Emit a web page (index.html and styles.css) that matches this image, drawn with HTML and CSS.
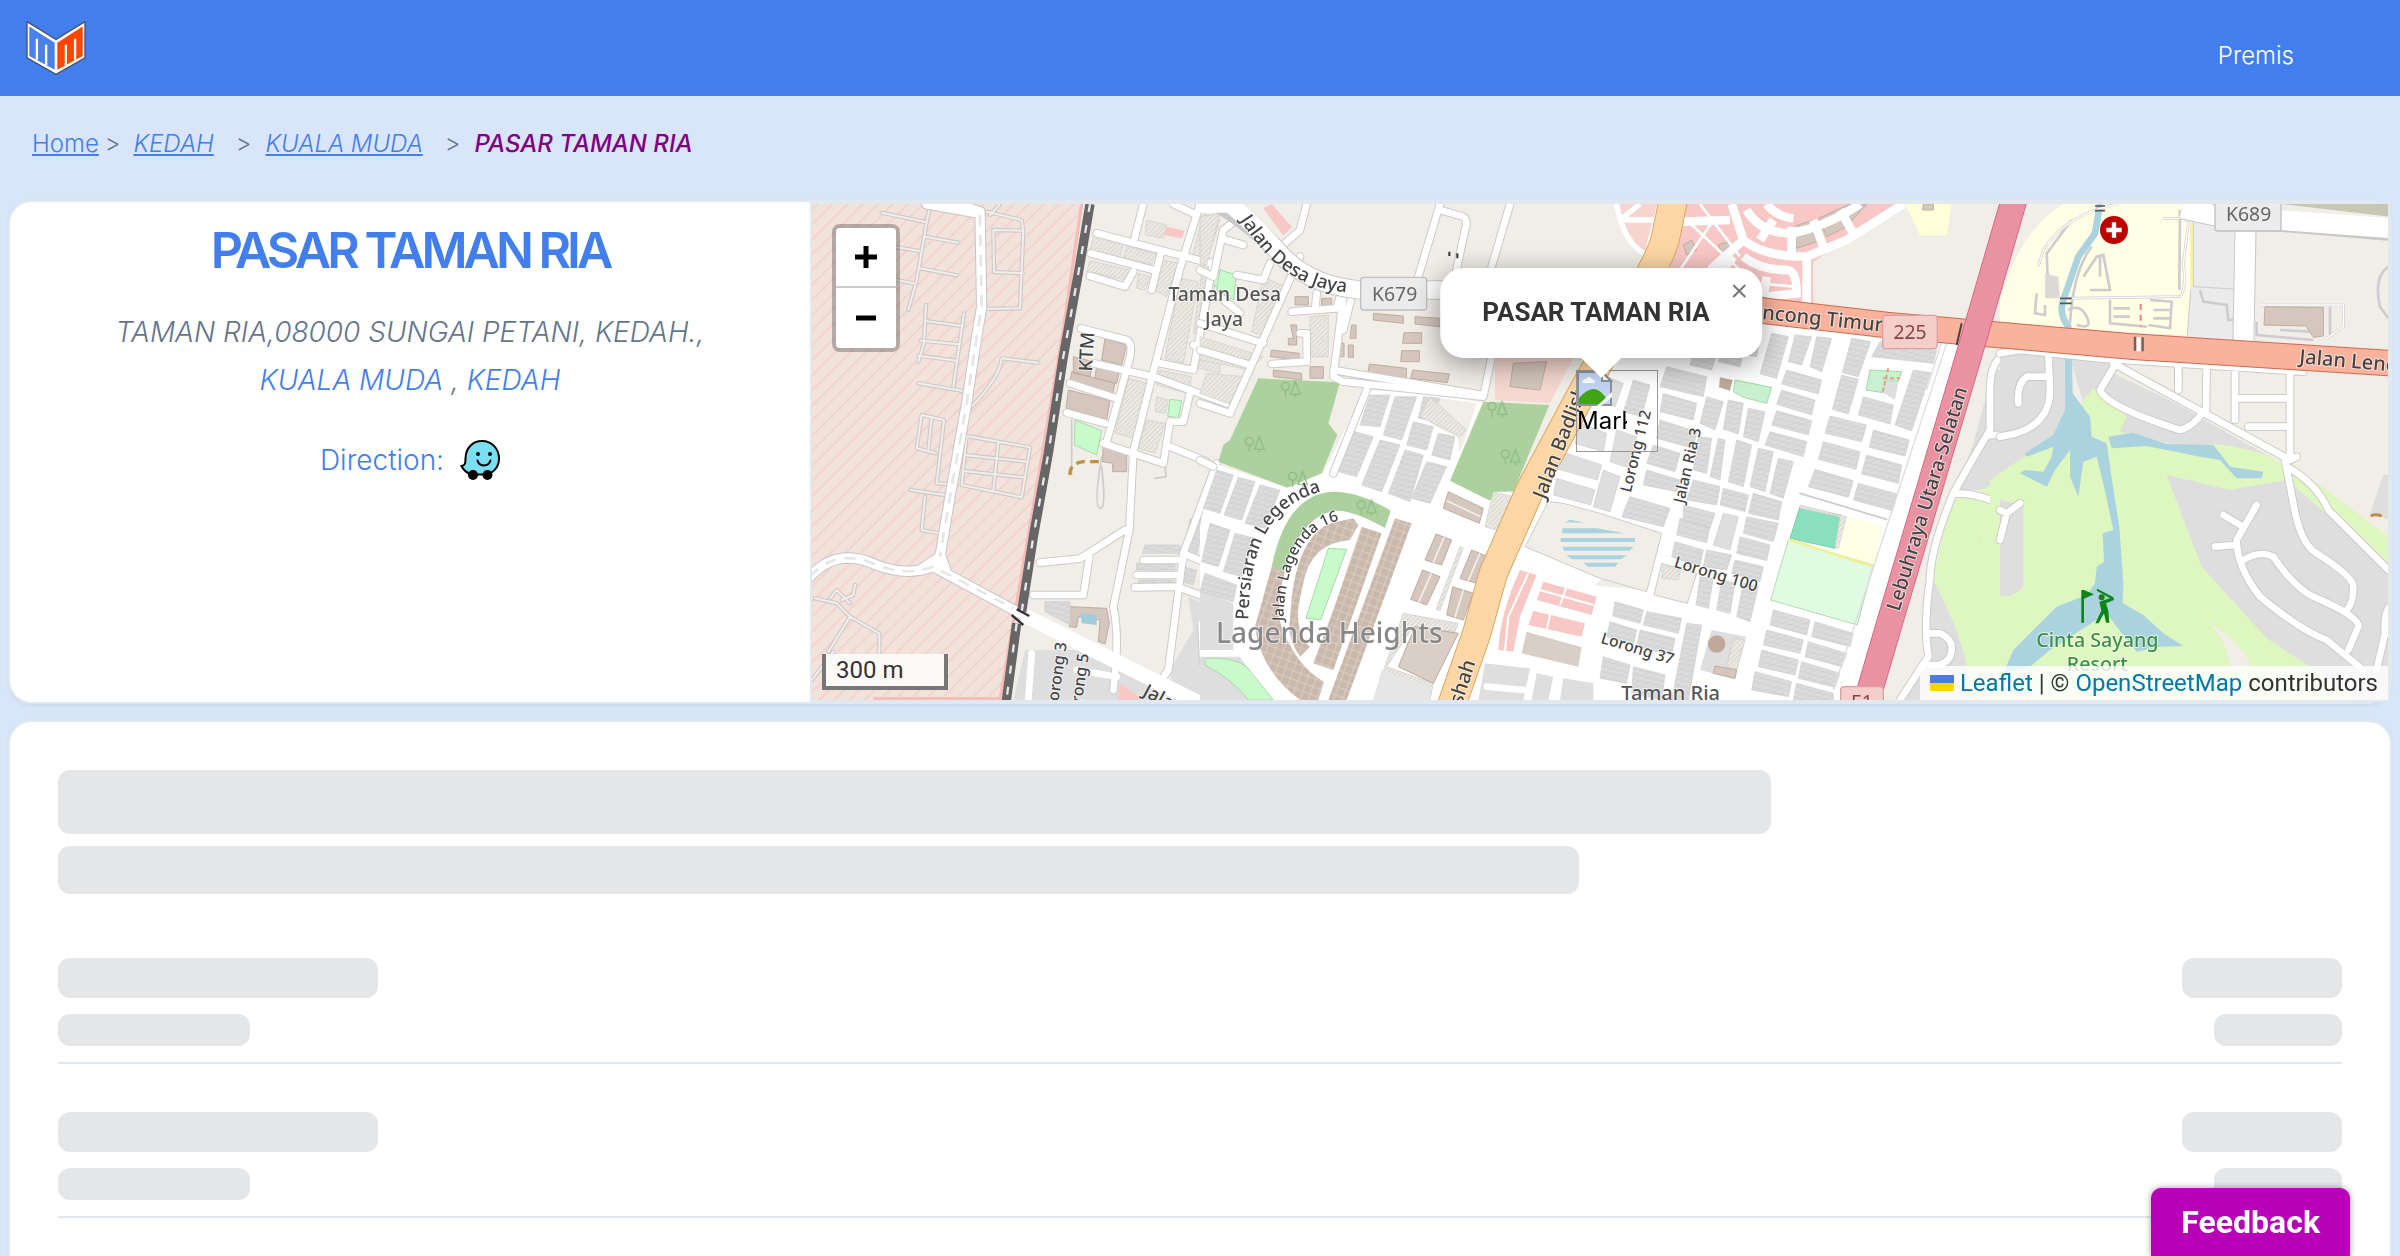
FILE: index.html
```html
<!DOCTYPE html>
<html lang="ms">
<head>
  <meta charset="UTF-8">
  <meta name="viewport" content="width=device-width, initial-scale=1.0">
  <title>PASAR TAMAN RIA</title>
  <link rel="stylesheet" href="styles.css">
</head>
<body>
  <header class="navbar">
    <a class="logo" href="#" aria-label="Home">
      <svg viewBox="0 0 180 164">
        <path d="M2 2 90 56 178 2V112L90 162 2 112Z" fill="#fff" stroke="#4a4f6b" stroke-width="4"/>
        <path d="M9 17 86 66V148L9 106Z" fill="#4a80e8"/>
        <path d="M171 17 94 66V148L171 106Z" fill="#ff4500"/>
        <path d="M32 54V118M60 72V134M120 72V134M148 54V118" stroke="#fff" stroke-width="7"/>
      </svg>
    </a>
    <a class="nav-link" href="#">Premis</a>
  </header>

  <nav class="breadcrumb">
    <a href="#">Home</a><span class="sep sep-first">&gt;</span>
    <a class="place" href="#">KEDAH</a><span class="sep">&gt;</span>
    <a class="place" href="#">KUALA MUDA</a><span class="sep">&gt;</span>
    <span class="current">PASAR TAMAN RIA</span>
  </nav>

  <main>
    <section class="card premise">
      <div class="info">
        <h1>PASAR TAMAN RIA</h1>
        <p class="address">TAMAN RIA,08000 SUNGAI PETANI, KEDAH.,<br><a href="#">KUALA MUDA</a> , <a href="#">KEDAH</a></p>
        <a class="direction" href="#">Direction:
          <svg class="waze" viewBox="0 0 80 80">
            <path d="M44 2C64 2 78 18 78 37C78 56 65 68 48 69H22C13 65 6 59 3 52C11 51 11 45 11 36C12 16 25 2 44 2Z" fill="#7bdff2" stroke="#000" stroke-width="4"/>
            <circle cx="26" cy="70" r="10"/><circle cx="55" cy="70" r="10"/>
            <circle cx="36" cy="28" r="4"/><circle cx="60" cy="28" r="4"/>
            <path d="M35 41C38 54 57 54 61 41" fill="none" stroke="#000" stroke-width="4" stroke-linecap="round"/>
          </svg>
        </a>
      </div>

      <div class="map">
        <svg class="tiles" viewBox="0 0 4728 1488" preserveAspectRatio="xMidYMid slice">
          <defs>
            <pattern id="industrial" width="32" height="32" patternUnits="userSpaceOnUse" patternTransform="rotate(45)">
              <rect width="32" height="32" fill="#f1e3dc"/><rect width="6" height="32" fill="#f5d3cd"/>
            </pattern>
            <pattern id="houses" width="22" height="16" patternUnits="userSpaceOnUse" patternTransform="rotate(14)">
              <rect width="22" height="16" fill="#dcdcdc"/><path d="M0 16 22 0M0 8H22" stroke="#cbcbcb" stroke-width="2"/>
            </pattern>
            <pattern id="lots" width="20" height="20" patternUnits="userSpaceOnUse" patternTransform="rotate(45)">
              <rect width="20" height="20" fill="#eeebe3"/><path d="M2 0V20M12 0V20" stroke="#d3d1cc" stroke-width="3"/>
            </pattern>
            <pattern id="semi" width="24" height="24" patternUnits="userSpaceOnUse" patternTransform="rotate(20)">
              <rect width="24" height="24" fill="#c9b8ac"/><path d="M0 12H24M12 0V24" stroke="#ddcfc5" stroke-width="3"/>
            </pattern>
            <g id="trees" fill="none" stroke="#8cb87f" stroke-width="4">
              <circle cx="14" cy="14" r="12"/><path d="M14 26V46M44 0 30 38H58ZM44 38V48"/>
            </g>
            <path id="west-lanes" d="M245 68 380 97 390 45M380 97 350 270 325 360M375 140 475 158M360 235 470 256M290 172 358 183M290 270 340 280M580 120 670 122 660 355 555 357M580 120 582 246 668 250M560 65 665 90 670 122M598 45 570 75M378 345 372 460 355 515M375 393 488 408M362 452 476 463M355 497 470 512M492 370 460 590M355 580 495 604M715 518 605 505Q600 560 515 650M365 675 432 690 410 880 442 882M365 675 350 775 408 790M395 680 385 780M332 900 440 916M375 920 365 1020 425 1032M500 738 690 772 665 922 485 885 500 738M595 755 580 900M495 795 680 815M490 843 672 862M45 1225 110 1240 150 1280 238 1330V1390M150 1280 85 1385M90 1225 110 1200 150 1240M165 1185 160 1215 125 1230M36 1470 100 1385"/>
            <path id="west-roads" d="M1030 42 1000 160M1120 42 1190 75M890 130 1240 222M872 190 1060 240M870 258 975 290 1000 245M1085 180 1055 300M1200 42 1140 235 1060 545 1000 785 988 1020 940 1250Q960 1340 940 1500M842 415 980 450Q1000 460 988 510L920 755M880 520 1060 560 1280 640M810 580 950 625M800 668 915 700M910 760 1090 820 1110 695 1150 695 1172 600M1110 770 1220 815M720 1118 840 1106 975 1020M868 1100 850 1215 700 1215M1250 820 1150 1090 1105 1440 1070 1490M1180 465 1290 495M1080 520 1180 540 1240 215M1030 1110H1150M1010 1155H1140M1005 1192 1130 1190 1270 1240M1150 1090 1270 1140M1205 1300 1210 1420 1270 1500"/>
            <path id="persiaran" d="M145 1290C150 1080 200 950 362 905"/>
            <path id="lagenda16" d="M250 1294C255 1130 300 1005 450 985"/>
            <path id="desa-jaya" d="M120 90C200 210 280 295 450 308"/>
          </defs>

          <rect width="4728" height="1488" fill="#f1eee8"/>
          <path d="M2364 458 2864 308 3454 408 3194 1488H1984L2044 1358 2164 1128 2504 1158 2554 988 2264 908 2324 518Z" fill="#fff"/>

          <!-- industrial area and railway -->
          <g transform="translate(-36 -42)">
            <path d="M36 42H845L790 420 700 1000 600 1530H36Z" fill="url(#industrial)"/>
            <path d="M845 42 790 420 700 950 600 1530M220 1526H600" fill="none" stroke="#f8bcb8" stroke-width="10"/>
            <use href="#west-lanes" class="lane-edge"/><use href="#west-lanes" class="lane"/>
            <path d="M675 1380H830L950 1420 1060 1500 1080 1530H640Z" fill="#dedede"/>
            <path d="M1165 1220 1260 1260V1530H1120L1110 1440 1180 1320Z" fill="#dedede"/>
            <path d="M1040 90 1100 105 1090 145 1035 135ZM1210 70 1260 90 1220 215 1175 205ZM885 125 970 155 960 205 870 180ZM980 170 1068 190 1055 222 970 205ZM870 212 990 240 980 270 860 245ZM1090 210 1135 220 1100 320 1060 300ZM1015 250 1050 260 1035 300 1010 295ZM1140 265 1195 275 1150 520 1095 505ZM1205 250 1250 270 1200 440 1180 430ZM1080 540 1175 560 1165 610 1070 585ZM985 565 1040 580 1005 745 945 730ZM1070 620 1105 630 1095 670 1065 665ZM1040 690 1095 700 1065 790 1015 775ZM1190 490 1260 510V550L1175 530Z" class="lots"/>
            <path d="M1100 110 1155 122 1145 145 1090 135Z" fill="#f8c8c6"/>
            <path d="M915 445 980 465 965 525 905 510ZM820 500 880 515 870 560 820 550ZM890 525 958 545 950 580 885 565ZM815 545 945 580 935 625 808 590ZM805 600 930 632 920 690 798 655ZM910 760 980 790V845H938V820L908 815ZM808 1250 920 1255 928 1300 915 1362 895 1355 900 1290 835 1280 830 1312 808 1310Z" class="brown"/>
            <path d="M735 1235H810V1305L735 1265ZM1035 1065H1140V1090H1028ZM1010 1120H1125V1140H1010ZM1015 1170H1120V1180H1015ZM1170 985 1215 990 1185 1115 1150 1100ZM1230 1040 1270 1060V1150L1200 1115ZM1235 870 1270 880V960L1215 950ZM1150 1130 1190 1140 1180 1185 1145 1175Z" class="houses"/>
            <path d="M825 690 905 722 890 795 823 765ZM1110 628 1145 632 1135 685 1103 678ZM1245 240H1265V300L1240 285Z" class="garden"/>
            <path d="M842 1270 890 1275V1305L845 1300Z" fill="#9fcddd"/>
            <path d="M815 690V850M905 800Q880 950 900 955T905 830M1095 820 1098 860 1065 865" class="thin"/>
            <path d="M810 855Q808 820 850 815H900" fill="none" stroke="#c09240" stroke-width="10" stroke-dasharray="26 16"/>
            <use href="#west-roads" class="road-edge"/><use href="#west-roads" class="road"/>
            <path d="M30 1160Q110 1070 230 1125Q320 1160 400 1130L660 1270 900 1390 1080 1480 1200 1540M465 42 540 65 545 350Q520 500 500 640L450 920 420 1100 360 1140M380 42 540 70M420 1090 440 1150" class="mid-edge"/>
            <path d="M30 1160Q110 1070 230 1125Q320 1160 400 1130L660 1270 900 1390 1080 1480 1200 1540M465 42 540 65 545 350Q520 500 500 640L450 920 420 1100 360 1140M380 42 540 70M420 1090 440 1150" class="mid"/>
            <path d="M670 1275 900 1390 1080 1480 1200 1540" fill="none" stroke="#fff" stroke-width="44"/>
            <path d="M30 1160Q110 1070 230 1125Q320 1160 400 1130L640 1255M540 75 545 350Q520 500 500 640L450 920 420 1100" fill="none" stroke="#e6e6e6" stroke-width="8" stroke-dasharray="34 26"/>
            <path d="M870 42 835 250 790 500 745 790 700 1040 665 1265M650 1300 618 1540" fill="none" stroke="#666" stroke-width="28"/>
            <path d="M870 42 835 250 790 500 745 790 700 1040 665 1265M650 1300 618 1540" fill="none" stroke="#e8e8e8" stroke-width="7" stroke-dasharray="24 40"/>
            <path d="M635 1275 670 1305M650 1258 688 1278" stroke="#333" stroke-width="7"/>
            <path d="M695 1390 685 1530M830 1440 950 1460" class="road"/>
            <path d="M960 1480 1030 1530H955Z" fill="#f8c8c6"/>
            <text class="street" transform="translate(876 545) rotate(-87)" font-size="56">KTM</text>
            <text class="street" transform="translate(772 1560) rotate(-82)" font-size="48">Lorong 3</text>
            <text class="street" transform="translate(838 1594) rotate(-82)" font-size="48">Lorong 5</text>
            <text class="street" transform="translate(1025 1515) rotate(28)" font-size="56">Jalan</text>
          </g>

          <!-- Desa Jaya and Lagenda Heights -->
          <g transform="translate(1164 -42)">
            <path d="M0 1010 40 820 262 893 370 850 495 600 720 612 850 640 940 905 1150 560 1400 600V1130L1200 1170 820 1530H0Z" fill="#fff"/>
            <path d="M0 1200 100 1240V1380H0ZM0 1400H120L210 1530H0Z" fill="#dedede"/>
            <path d="M15 1405Q100 1400 140 1430L220 1530H145Q100 1470 15 1425Z" class="garden"/>
            <path d="M50 840 100 855 60 970 10 955ZM115 862 165 875 125 990 72 975ZM180 885 240 900 195 1015 135 1000ZM30 1000 90 1020 55 1130 5 1115ZM105 1030 165 1045 125 1160 70 1145ZM15 1150 110 1185 100 1235 0 1205Z" class="houses"/>
            <path d="M640 695 700 710 680 780 620 765ZM715 730 765 740 750 810 695 795ZM465 725 520 740 470 860 415 845ZM540 750 600 765 545 905 485 885ZM615 780 670 795 630 935 565 910ZM680 815 740 830 690 940 635 925Z" class="houses"/>
            <path d="M175 565 420 577 385 700 412 735 365 850 262 893 55 815 70 765 90 750ZM850 635 1048 645 940 905 885 905 870 932 750 872Z" fill="#add19e"/>
            <path d="M690 620 830 640 780 790 770 740 690 700Z" fill="#f1eee8"/>
            <path d="M510 615 570 615 540 710 480 705ZM585 620 650 620 605 750 550 735ZM670 620 720 625 690 690 655 685Z" class="houses"/>
            <path d="M60 240 110 255 100 330 50 300Z" class="garden"/>
            <path d="M0 80 60 70 20 225 0 220ZM190 260 255 290 200 440 155 425ZM0 440 190 500 150 540 0 510ZM20 550 140 560 110 650 0 610ZM330 380 385 375V500H330ZM690 620 800 720 780 740 660 680Z" class="lots"/>
            <path d="M285 320H325V345H285ZM365 325H395V352H365ZM272 405H290V465H265V445H280ZM215 480 298 490 296 510 210 500ZM220 540 305 550V570L220 560ZM330 530H370V565H330ZM455 405H468V445H450ZM418 460H432V500H418ZM445 465H460V502H445ZM520 370 610 378V400L520 390ZM645 380 720 385V410L645 402ZM612 428H665V460H608ZM605 482H658V515H602ZM508 522 620 535 618 570 503 555ZM638 540 748 552 742 578 632 565Z" class="brown"/>
            <path d="M720 42 655 260M720 60 790 80Q805 90 795 120L765 260M930 42 875 230" class="road-edge"/>
            <path d="M720 42 655 260M720 60 790 80Q805 90 795 120L765 260M930 42 875 230" class="road"/>
            <path d="M320 42 300 120 250 165M80 150 130 165M0 240 40 260 70 120 120 80M110 255 190 270 210 220M60 320 120 370M345 360 350 310M275 365 410 355 420 320M300 430 320 430 320 515 215 522M0 400 190 460M0 480 150 525M0 640 90 670 300 200M0 810 40 830M430 320 400 560 430 575 850 620 875 500M400 540 850 615M455 320 430 420M500 600 400 850" class="road-edge"/>
            <path d="M320 42 300 120 250 165M80 150 130 165M0 240 40 260 70 120 120 80M110 255 190 270 210 220M60 320 120 370M345 360 350 310M275 365 410 355 420 320M300 430 320 430 320 515 215 522M0 400 190 460M0 480 150 525M0 640 90 670 300 200M0 810 40 830M430 320 400 560 430 575 850 620 875 500M400 540 850 615M455 320 430 420M500 600 400 850" class="road"/>
            <path d="M60 42Q170 110 235 185Q320 285 480 300H760" fill="none" stroke="#c8c8c8" stroke-width="58"/>
            <path d="M0 42H90Q170 110 235 185Q320 285 480 300H760" fill="none" stroke="#fff" stroke-width="52"/>
            <path d="M190 55 215 42 275 110 250 138Z" fill="#f8c8c6"/>
            <!-- Lagenda ring -->
            <path d="M215 1130Q260 910 400 905Q480 905 572 962L555 1014Q440 950 390 965Q300 990 252 1145Z" fill="#add19e"/>
            <path d="M165 1310 215 1130 255 1145Q225 1260 245 1310Q290 1430 372 1475L355 1530H300Q180 1440 165 1310ZM270 1290Q280 1050 390 1000L460 985 475 1005 450 1050Q330 1060 310 1180Q290 1260 295 1290 300 1350 330 1370L300 1400Q260 1340 270 1290ZM485 1010 545 1030 400 1440 340 1420 400 1260ZM585 985 635 1000 440 1530H385Z" class="semi"/>
            <path d="M385 1075 440 1078 362 1290 318 1285Z" class="garden"/>
            <path d="M745 905 850 955 838 1000 730 955ZM708 1032 755 1050 725 1125 675 1110ZM815 1080 865 1100 830 1180 780 1165ZM668 1140 720 1160 680 1245 632 1228ZM758 1190 820 1210 790 1290 740 1275Z" class="brown"/>
            <path d="M740 932 842 980M732 1042 700 1118M840 1090 805 1172M694 1150 656 1237M790 1200 765 1282" stroke="#f3efeb" stroke-width="5"/>
            <path d="M610 1270 775 1300 765 1325 640 1310 560 1430 700 1480 690 1530H520ZM880 905 940 920 905 1025 855 1010ZM780 1070 790 1074 720 1262 708 1258Z" class="lots"/>
            <path d="M645 1310 775 1330 700 1480 595 1430Z" fill="#d9cfc7" stroke="#bba89d" stroke-width="3"/>
            <path d="M545 1440 690 1490V1530H520Z" fill="#e6e6e6"/>
            <!-- shop rows right of the green -->
            <path d="M885 505H1120L1050 640 885 630Z" fill="#f6d8d2"/>
            <path d="M940 520 1040 515 1020 600 930 590Z" class="brown"/>
            <path d="M960 1140 1010 1155 960 1280 940 1385 895 1380Q900 1270 960 1140ZM1030 1175 1190 1220 1175 1275 1010 1230ZM1000 1262 1155 1300 1145 1340 985 1305Z" fill="#f8c8c6"/>
            <path d="M985 1150 925 1280 915 1385M1100 1190 1080 1245M1050 1275 1040 1320M1020 1200 1180 1245" stroke="#fff" stroke-width="6" fill="none"/>
            <path d="M980 1325 1145 1372 1135 1430 965 1390Z" fill="#d9cfc7"/>
            <path d="M855 1420 990 1435 970 1530H835ZM1010 1450 1060 1460 1045 1530H995ZM1090 1465 1180 1480V1530H1080Z" fill="#dedede"/>
            <path d="M860 1490 970 1500" class="road"/>
            <!-- reservoir -->
            <path d="M1045 935 975 1070 1200 1165 1340 1205 1385 1030 1200 970 1090 940Z" fill="#f1eee8" stroke="#ccc" stroke-width="3"/>
            <path d="M1095 997 1110 989 1155 998ZM1087 1015H1190L1275 1030H1087ZM1082 1044H1305V1056H1082ZM1088 1070H1300L1290 1082H1092ZM1100 1096H1280L1262 1108H1115ZM1150 1118H1255L1245 1130H1165Z" fill="#aad3df"/>
            <g opacity=".9">
              <use href="#trees" x="242" y="575"/><use href="#trees" x="134" y="740"/><use href="#trees" x="264" y="845"/><use href="#trees" x="862" y="635"/><use href="#trees" x="902" y="778"/><use href="#trees" x="470" y="930"/>
            </g>
            <text class="town" x="74" y="332" text-anchor="middle" font-size="58">Taman Desa</text>
            <text class="town" x="72" y="408" text-anchor="middle" font-size="58">Jaya</text>
            <text class="street" font-size="56"><textPath href="#desa-jaya">Jalan Desa Jaya</textPath></text>
            <text class="street" font-size="54"><textPath href="#persiaran">Persiaran Legenda</textPath></text>
            <text class="street" font-size="46"><textPath href="#lagenda16">Jalan Lagenda 16</textPath></text>
            <text class="suburb" x="388" y="1360" text-anchor="middle" font-size="84">Lagenda Heights</text>
            <g class="shield"><rect x="482" y="262" width="198" height="98" rx="10"/><text x="584" y="334" text-anchor="middle" font-size="58">K679</text></g>
            <path d="M748 185V198M772 190V205" stroke="#333" stroke-width="6"/>
          </g>

          <!-- Taman Ria -->
          <g transform="translate(2364 -42)">
            <path d="M50 42H180L130 200Q60 130 50 42Z" fill="#f8d4d0"/>
            <path d="M260 42H900L640 215V350L480 330 210 240Z" fill="#f8c8c6"/>
            <path d="M50 42Q70 160 140 195L180 42M60 90H160M60 90 120 42" fill="none" stroke="#fff" stroke-width="16"/>
            <path d="M580 110 640 90 665 150 590 175ZM655 85 750 42H800L740 110 680 140ZM250 165 275 150 290 180 260 195ZM355 165 385 155 400 185 370 200Z" class="brown"/>
            <path d="M395 42 430 150Q490 200 620 200L740 150 910 42M440 60Q480 130 575 130 680 110 780 42M500 42Q530 80 580 85M620 200V360M430 200Q480 240 560 240 590 240 590 310L500 320M250 95 390 90M480 150 520 90M575 110V190M640 90 670 170M720 60 760 130M400 200 370 240M430 150 330 240M500 260 490 320" fill="none" stroke="#fff" stroke-width="26"/>
            <path d="M270 100 420 240M340 90 240 240M300 42 420 200M480 280 580 290" fill="none" stroke="#fff" stroke-width="8"/>
            <path d="M915 42H1055L1040 135H960Z" fill="#ffffd8"/>
            <path d="M970 42H1000V60H968Z" class="brown"/>

            <!-- terrace blocks -->
            <path d="M515 430 565 440 530 565 480 552ZM585 435 635 440 605 525 565 515ZM650 440 695 445 665 545 630 530ZM755 445 812 455 775 560 727 548ZM725 555 775 568 745 672 697 658ZM840 455 1010 480 1000 520 815 500ZM560 540 665 570 655 612 545 582ZM545 600 645 630 635 675 530 643ZM530 662 635 692 625 735 515 705ZM510 725 620 755 610 800 495 765ZM940 540 992 548 935 722 885 705ZM790 620 880 645 870 702 775 675ZM690 678 800 705 785 755 675 730ZM820 720 928 750 915 798 808 772ZM670 755 780 785 768 838 655 808ZM800 795 905 825 895 880 785 852ZM645 838 760 872 745 922 625 890ZM775 880 892 912 878 962 760 930Z" class="houses"/>
            <path d="M420 430 480 445 470 500 400 490ZM370 470 430 485 420 530 355 515ZM200 530 320 560 310 620 180 590ZM280 490 345 505 335 540 270 525ZM100 570 150 585 125 680 70 665ZM190 610 290 640 280 690 180 665ZM320 620 370 635 345 720 300 700ZM385 630 430 640 415 732 370 718ZM445 655 495 665 475 755 430 740ZM180 690 290 725 280 775 170 745ZM355 745 375 750 360 870 330 860ZM410 750 455 765 430 890 385 875ZM475 775 520 785 495 905 450 890ZM535 805 580 815 550 925 510 910ZM295 740 335 745 320 850 280 840ZM160 765 240 790 225 845 140 820ZM140 840 240 870 230 905 130 885ZM280 870 360 890 350 945 260 930ZM370 895 445 915 435 965 360 945ZM460 910 545 935 535 990 445 970ZM250 945 345 970 330 1015 250 990ZM90 920 210 955 190 1010 65 980ZM240 985 330 1010 320 1058 230 1035ZM440 980 535 1000 520 1055 430 1030ZM420 1040 510 1065 500 1112 410 1090ZM225 1055 310 1080 300 1130 215 1100ZM320 1080 395 1095 380 1140 310 1130ZM405 1110 490 1130 480 1175 395 1150Z" class="houses"/>
            <path d="M370 970 415 980 390 1080 340 1065ZM10 840 60 860 30 965-20 950ZM50 720 110 740 90 835 30 815ZM20 560 70 580 45 650-10 630ZM-60 700 20 730 10 785-75 760ZM-115 785 5 825-8 870-135 835ZM-130 865-15 900-28 945-140 915Z" fill="#dedede" stroke="#ccc" stroke-width="2"/>
            <path d="M300 1160 340 1165 325 1255 288 1245ZM365 1170 405 1180 390 1270 350 1260ZM430 1180 475 1190 450 1295 410 1280ZM45 1235 130 1260 120 1300 38 1278ZM140 1265 245 1285 235 1330 130 1305ZM30 1295 110 1320 100 1365 20 1340ZM120 1320 225 1345 215 1395 110 1370ZM260 1300 305 1305 265 1530H215ZM10 1400 90 1425 80 1480 0 1465ZM100 1430 195 1455 185 1530 95 1510ZM520 1260 630 1290 620 1335 510 1305ZM645 1295 760 1330 750 1370 635 1340ZM500 1320 610 1350 600 1390 490 1365ZM625 1355 740 1390 725 1430 615 1400ZM485 1380 595 1410 585 1455 475 1430ZM605 1415 720 1450 705 1492 595 1465ZM465 1445 575 1475 565 1520 455 1500ZM590 1480 700 1510V1530H580Z" class="houses"/>
            <path d="M185 1120 290 1150 262 1240 162 1215Z" fill="#f1eee8" stroke="#ccc" stroke-width="3"/>
            <path d="M335 1320 438 1340 405 1468 300 1440Z" fill="#dedede"/><path d="M400 1345 435 1350 410 1440 380 1430ZM190 1125 240 1140 235 1170 185 1165Z" class="lots"/>
            <circle cx="350" cy="1362" r="26" fill="#c0a99b"/><path d="M345 1428 410 1440 405 1465 340 1450Z" class="brown"/>
            <path d="M360 562 398 570 390 602 357 592Z" fill="#c0a99b"/>
            <path d="M405 570 515 592 500 640 430 622 400 605ZM810 540 905 545 895 575 860 570 850 608 798 600Z" fill="#c8f2cf" stroke="#a3d8ad" stroke-width="3"/>
            <path d="M865 535 848 605M850 565H900" stroke="#ed9a84" stroke-width="6" stroke-dasharray="12 8"/>
            <path d="M862 570 895 578 885 630 850 608Z" fill="#dedede"/>
            <path d="M600 950 722 975 705 1075 570 1045Z" fill="#88e0be" stroke="#7bcba9" stroke-width="3"/>
            <path d="M600 945 740 980 715 1075 705 1070 720 980 600 955Z" class="lots"/>
            <path d="M742 980 850 1010 820 1130 715 1095Z" fill="#ffffe5"/>
            <path d="M565 1050 820 1125 772 1305 512 1230Z" fill="#dffce2" stroke="#b4d8b4" stroke-width="3"/>
            <path d="M565 1048 820 1130" stroke="#eef09c" stroke-width="9"/>
            <path d="M600 910 860 988" class="thin"/>
            <path d="M1040 460 700 1500M1025 455 980 600" fill="none" stroke="#ddd" stroke-width="4"/>

            <!-- golf and east of the highway -->
            <path d="M1180 490 1210 480 1200 860 1060 950 1000 1160 975 1400 890 1530H820L1110 560Z" fill="#f1eee8"/>
            <path d="M1180 540H1300V900H1070L1120 760ZM1000 1160 1140 1000 1260 1100V1530H890L980 1400Z" fill="#dedede"/>
            <path d="M1070 925Q1180 900 1200 850H1400V1530H1115Q1110 1380 1000 1170 1030 1000 1070 925Z" fill="#def6c0"/>
            <path d="M1140 1040 1200 1030V1215L1170 1215Q1150 1140 1115 1110Z" fill="#dedede"/>
            <path d="M1230 490Q1170 500 1170 600V720Q1110 820 1060 910 990 1080 990 1170 970 1300 985 1400L900 1530M1165 735H1240M1060 910Q1150 910 1210 950M1210 1050Q1160 1110 1210 1180M990 1330H1020Q1060 1350 1055 1380 1050 1430 990 1425" class="road-edge"/>
            <path d="M1230 490Q1170 500 1170 600V720Q1110 820 1060 910 990 1080 990 1170 970 1300 985 1400L900 1530M1165 735H1240M1060 910Q1150 910 1210 950M1210 1050Q1160 1110 1210 1180M990 1330H1020Q1060 1350 1055 1380 1050 1430 990 1425" class="road"/>
            <text class="street" transform="translate(92 910) rotate(-76)" font-size="47">Lorong 112</text>
            <text class="street" transform="translate(252 942) rotate(-77)" font-size="47">Jalan Ria 3</text>
            <text class="street" transform="translate(220 1130) rotate(17)" font-size="48">Lorong 100</text>
            <text class="street" transform="translate(0 1358) rotate(17)" font-size="47">Lorong 37</text>
            <text class="town" x="212" y="1530" text-anchor="middle" font-size="60">Taman Ria</text>
          </g>

          <!-- hospital, Jalan Lencongan Timur, Cinta Sayang -->
          <g transform="translate(3564 -42)">
            <path d="M190 42H565L585 300 565 437 0 400V330Q60 120 190 42Z" fill="#ffffe5"/>
            <path d="M580 42H700V445L562 437 572 300Z" fill="#ebebeb"/>
            <path d="M580 95V290L700 297M572 297 562 437" fill="none" stroke="#ccc" stroke-width="3"/>
            <path d="M845 42H1170V80Z" fill="#c7c7b4"/>
            <path d="M0 475 170 490 200 500 220 700 150 750 0 850ZM210 500 330 515 380 680 250 640ZM300 530 860 800 850 870 680 760 380 735Z" fill="#dedede"/>
            <path d="M-30 870 160 740 280 595 380 680 850 800 1165 1040V1530H-100V1200H-160L-30 1000Z" fill="#def6c0"/>
            <path d="M380 680 360 725 410 735Q560 780 640 762 740 770 850 812L600 660Z" fill="#dedede"/>
            <path d="M0 930 70 945V1190Q30 1230 0 1215ZM500 855 690 900 860 870 1165 1130V1530H1080L800 1345 605 1130Z" fill="#dedede"/>
            <path d="M610 1285Q740 1370 750 1430H690Q680 1340 610 1285Z" fill="#f1eee8"/>
            <path d="M340 510 870 540 880 840 350 540ZM880 540 1170 560V1020L890 840Z" fill="#f1eee8"/>
            <path d="M1150 855H1170V990L1110 970Z" fill="#dedede"/>
            <!-- water -->
            <path d="M300 42 285 130 235 200 190 330Q175 370 205 410V600" fill="none" stroke="#aad3df" stroke-width="20"/>
            <path d="M198 500H216L218 610 270 680 275 740 320 760 345 930 358 1010 370 1180 368 1240 430 1275 490 1330 550 1368 480 1370 410 1385 350 1310 320 1270 150 1380 90 1430 10 1450 40 1380 170 1250 260 1215 285 1180 290 1130 312 1115 308 1030 340 1020 310 880 290 800 250 815 235 920 210 860 210 780 165 840 140 890 60 850 75 840 130 845 155 800 160 770 80 800 75 790 160 735 195 660ZM325 740 400 728 500 762 640 765 660 790 690 830 790 845 785 865 710 865 660 810 600 800 440 768 335 775Z" fill="#aad3df"/>
            <!-- car parks -->
            <path d="M355 42Q200 70 130 180L115 230M215 90 140 190 145 320M110 310 105 370 135 375V345M275 170Q220 240 210 400M250 260 290 200 310 195 330 300 270 300M300 200V260M205 360Q240 340 260 380T230 405M180 325 540 320Q560 300 550 220L565 100 555 85H490M540 60 538 300M330 330V400L440 410M340 355H390M340 380H390M450 330 515 335 510 415 445 405M460 360H510M460 385H510M600 300 610 335 680 345 685 390H700M780 345H1030V410L980 445M770 395V435L940 450M990 350V440M840 420 930 425M1165 230Q1120 260 1140 350L1165 385" fill="none" stroke="#cfccd0" stroke-width="8"/>
            <path d="M355 42Q200 70 130 180L115 230M180 325 540 320Q560 300 550 220L565 100 555 85H490M780 345H1030V410L980 445" fill="none" stroke="#fff" stroke-width="4"/>
            <path d="M135 250 175 260 180 325H135Z" fill="#dcdad8"/>
            <path d="M795 350 970 352V438L940 442 918 408 792 405Z" class="brown"/>
            <path d="M422 342V410" stroke="#f28080" stroke-width="6" stroke-dasharray="18 14"/>
            <path d="M285 48H315M285 62H315M180 325H215M180 340H215" stroke="#555" stroke-width="5"/>
            <path d="M575 100V290" stroke="#f6f2a0" stroke-width="8"/>
            <!-- white streets -->
            <path d="M340 520 870 810 890 800M535 525V600M620 530 618 660M705 535V690M870 545V800M715 625H860M745 710H860M345 525 300 600Q320 650 540 720 580 710 610 665M0 740Q150 720 150 600L145 490M145 560H80Q50 580 55 640M0 490 60 480 300 505 910 545M855 810 880 940Q900 1060 950 1090 1060 1160 1060 1190 1060 1240 1040 1260M860 830Q950 880 985 960L1165 1140M770 945 710 1050Q710 1130 780 1220 900 1320 980 1350L1090 1440M670 975 720 1005M645 1070 705 1065M730 1110Q780 1080 820 1100 880 1190 940 1220 1080 1280 1075 1310L1045 1380M1170 1250Q1150 1270 1155 1330L1130 1440M0 960 20 970 60 940M20 970 0 1050" class="road-edge"/>
            <path d="M340 520 870 810 890 800M535 525V600M620 530 618 660M705 535V690M870 545V800M715 625H860M745 710H860M345 525 300 600Q320 650 540 720 580 710 610 665M0 740Q150 720 150 600L145 490M145 560H80Q50 580 55 640M0 490 60 480 300 505 910 545M855 810 880 940Q900 1060 950 1090 1060 1160 1060 1190 1060 1240 1040 1260M860 830Q950 880 985 960L1165 1140M770 945 710 1050Q710 1130 780 1220 900 1320 980 1350L1090 1440M670 975 720 1005M645 1070 705 1065M730 1110Q780 1080 820 1100 880 1190 940 1220 1080 1280 1075 1310L1045 1380M1170 1250Q1150 1270 1155 1330L1130 1440M0 960 20 970 60 940M20 970 0 1050" class="road"/>
            <path d="M737 100 730 460M545 55 640 75 1170 120" fill="none" stroke="#c8c8c8" stroke-width="66"/>
            <path d="M737 90 730 470M545 55 640 75 1180 115" fill="none" stroke="#fff" stroke-width="60"/>
            <path d="M1112 978Q1125 970 1145 978" fill="none" stroke="#b98f45" stroke-width="9"/>
          </g>

          <!-- main roads -->
          <g transform="translate(2364 -42)" fill="none">
            <path d="M220 30 195 150Q170 230 90 350L-60 620-210 900-320 1150-370 1330-450 1560" stroke="#d9a862" stroke-width="88"/>
            <path d="M220 30 195 150Q170 230 90 350L-60 620-210 900-320 1150-370 1330-450 1560" stroke="#fcd6a4" stroke-width="82"/>
            <path d="M300 340 600 375 860 405 1200 435 1600 470 2380 520" stroke="#cd6a50" stroke-width="80"/>
            <path d="M300 340 600 375 860 405 1200 435 1600 470 2380 520" stroke="#f9b29c" stroke-width="74"/>
            <path d="M1085 400 1070 465M1158 420 1138 482" stroke="#444" stroke-width="6"/>
            <path d="M1245 20 1120 450 990 890 880 1260 795 1550" stroke="#dc5a80" stroke-width="80"/>
            <path d="M1245 20 1120 450 990 890 880 1260 795 1550" stroke="#e892a2" stroke-width="75"/>
          </g>
          <g transform="translate(3564 -42)">
            <path d="M405 440V482M428 442V484" stroke="#666" stroke-width="7"/><path d="M416 442V484" stroke="#fff" stroke-width="12"/>
            <circle cx="342" cy="120" r="42" fill="#bf0000"/><path d="M342 97V143M319 120H365" stroke="#fff" stroke-width="13"/>
            <g class="shield"><rect x="645" y="20" width="198" height="103" rx="10"/><text x="746" y="94" text-anchor="middle" font-size="58">K689</text></g>
            <text class="street" transform="translate(897 520) rotate(5)" font-size="60">Jalan Lencongan</text>
            <g fill="#0e8517"><path d="M244 1200H252V1298H244ZM252 1200 282 1213 252 1226Z"/><circle cx="305" cy="1222" r="9"/><path d="M292 1196 340 1222 342 1230 318 1240 325 1262 328 1298H318L312 1270 296 1300H286L304 1262 298 1235 330 1225 290 1202Z"/></g>
            <text class="resort" x="292" y="1372" text-anchor="middle" font-size="59">Cinta Sayang</text>
            <text class="resort" x="292" y="1442" text-anchor="middle" font-size="59">Resort</text>
          </g>
          <g transform="translate(2364 -42)">
            <text class="street" transform="translate(485 387) rotate(6)" font-size="60">ncong Timur</text>
            <g class="shield pink"><rect x="848" y="376" width="164" height="100" rx="10"/><text x="930" y="446" text-anchor="middle" font-size="58">225</text></g>
            <g class="shield pink"><rect x="722" y="1490" width="128" height="100" rx="10"/><text x="786" y="1558" text-anchor="middle" font-size="58">E1</text></g>
            <text class="street" transform="translate(898 1266) rotate(-73)" font-size="59">Lebuhraya Utara-Selatan</text>
            <text class="street" transform="translate(-165 930) rotate(-69)" font-size="59">Jalan Badlish</text>
            <text class="street" transform="translate(-420 1562) rotate(-72)" font-size="59">ishah</text>
          </g>
        </svg>

        <div class="marker">
          <svg class="broken" viewBox="0 0 36 36">
            <path d="M1 1H25L34 10V34H1Z" fill="#c3d6f5" stroke="#8d9299" stroke-width="2"/>
            <path d="M25 1V10H34Z" fill="#fff" stroke="#8d9299" stroke-width="2"/>
            <path d="M5 12Q6 8 9 8 12 4 15 8 18 9 18 12Z" fill="#fff"/>
            <path d="M2 33V27Q10 18 17 18 25 19 30 29L24 33Z" fill="#3fa516"/>
            <path d="M20 35 35 21V26L24 35Z" fill="#fff"/>
          </svg>
          <span class="alt">Marker</span>
        </div>

        <div class="popup">
          <strong>PASAR TAMAN RIA</strong>
          <button class="close" aria-label="Close popup">
            <svg viewBox="0 0 14 14"><path d="M1 1 13 13M13 1 1 13" stroke="#757575" stroke-width="2"/></svg>
          </button>
        </div>

        <div class="zoom">
          <button aria-label="Zoom in"><svg viewBox="0 0 22 22"><path d="M11 0V22M0 11H22" stroke="#000" stroke-width="5"/></svg></button>
          <button aria-label="Zoom out"><svg viewBox="0 0 22 22"><path d="M1 11H21" stroke="#000" stroke-width="5"/></svg></button>
        </div>
        <div class="scale">300 m</div>
        <div class="attribution">
          <a href="#"><svg class="flag" viewBox="0 0 24 16"><path fill="#4c7be1" d="M0 0H24V8H0Z"/><path fill="#ffd500" d="M0 8H24V16H0Z"/></svg> Leaflet</a> | © <a href="#">OpenStreetMap</a> contributors
        </div>
      </div>
    </section>

    <section class="card loading">
      <div class="bar bar-title"></div>
      <div class="bar bar-subtitle"></div>
      <div class="row">
        <div><div class="bar name"></div><div class="bar unit"></div></div>
        <div class="right"><div class="bar price"></div><div class="bar date"></div></div>
      </div>
      <div class="row">
        <div><div class="bar name"></div><div class="bar unit"></div></div>
        <div class="right"><div class="bar price"></div><div class="bar date"></div></div>
      </div>
      <div class="row">
        <div><div class="bar name"></div><div class="bar unit"></div></div>
        <div class="right"><div class="bar price"></div><div class="bar date"></div></div>
      </div>
    </section>
  </main>

  <button class="feedback">Feedback</button>
</body>
</html>
```

FILE: styles.css
```css
* {
  box-sizing: border-box;
}
body {
  margin: 0;
  background-color: #d9e5fb;
  font-family: Inter, sans-serif;
  font-size: 24px;
  font-weight: 300;
  color: #64748b;
}
a {
  color: #427eec;
  text-decoration: none;
}
button {
  border: none;
  padding: 0;
  cursor: pointer;
}

/* header */
.navbar {
  display: flex;
  justify-content: space-between;
  align-items: center;
  height: 96px;
  padding: 0 106px 0 26px;
  background-color: #427eec;
}
.logo svg {
  display: block;
  width: 60px;
  height: 54px;
}
.navbar .nav-link {
  padding-top: 14px;
  color: #fff;
}
.breadcrumb {
  display: flex;
  align-items: center;
  height: 96px;
  padding: 0 0 2px 32px;
}
.breadcrumb a {
  text-decoration: underline;
}
.breadcrumb .place {
  font-style: italic;
}
.sep {
  margin: 0 14px 0 22px;
}
.sep-first {
  margin: 0 13px 0 6px;
}
.current {
  font-style: italic;
  font-weight: 500;
  color: #800080;
}

main {
  display: flex;
  flex-direction: column;
  gap: 16px;
  padding: 8px 8px 16px;
}
.card {
  background-color: #fff;
  border: 2px solid #e2e8f0;
  border-radius: 24px;
  box-shadow: 0 2px 4px rgba(0,0,0,0.06);
}

/* premise details and map */
.premise {
  display: grid;
  grid-template-columns: 40fr 79fr;
  height: 504px;
}
.info {
  padding: 16px 8px;
  text-align: center;
}
.info h1 {
  margin: 0 0 26px;
  font-size: 50px;
  line-height: 64px;
  font-weight: 600;
  letter-spacing: -4px;
  color: #427eec;
}
.address {
  margin: 0 0 36px;
  font-size: 28px;
  line-height: 48px;
  font-style: italic;
}
.direction {
  display: flex;
  justify-content: center;
  align-items: center;
  gap: 16px;
  font-size: 28px;
}
.waze {
  width: 40px;
  height: 40px;
}
.map {
  position: relative;
  overflow: hidden;
  border: 2px solid #e2e8f0;
  font-family: Roboto, sans-serif;
  font-weight: 400;
  color: #333;
}
.tiles {
  position: absolute;
  width: 100%;
  height: 100%;
}

/* map drawing */
.tiles text {
  font-family: "Noto Sans", sans-serif;
}
.road, .road-edge, .mid, .mid-edge, .lane, .lane-edge, .thin {
  fill: none;
  stroke: #fff;
  stroke-linecap: round;
  stroke-linejoin: round;
}
.road { stroke-width: 20; }
.road-edge { stroke: #cdcbc8; stroke-width: 26; }
.mid { stroke-width: 28; }
.mid-edge { stroke: #c8c5c4; stroke-width: 34; }
.lane { stroke: #f2eeec; stroke-width: 6; }
.lane-edge { stroke: #cfcaca; stroke-width: 13; }
.thin { stroke: #ccc; stroke-width: 5; }
.houses { fill: url(#houses); stroke: #cdcdcd; stroke-width: 2; }
.lots { fill: url(#lots); stroke: #cdcdcd; stroke-width: 2; }
.semi { fill: url(#semi); }
.brown { fill: #d5c7be; stroke: #c0aca1; stroke-width: 3; }
.garden { fill: #c8facc; stroke: #abd9ae; stroke-width: 3; }
.street, .town, .suburb, .resort {
  fill: #444;
  font-weight: 500;
  stroke: rgba(255,255,255,0.6);
  stroke-width: 6;
  paint-order: stroke;
}
.town { fill: #555; }
.suburb { fill: #888; }
.resort { fill: #3c9045; }
.shield rect { fill: #ececec; stroke: #bfbfbf; stroke-width: 4; }
.shield text { fill: #666; }
.shield.pink rect { fill: #f5cdcb; stroke: #d9a2a2; }
.shield.pink text { fill: #8a4343; }

.marker {
  position: absolute;
  left: calc(50% - 24px);
  bottom: 50%;
  width: 82px;
  height: 82px;
  border: 1px solid #999;
  font-family: Inter, sans-serif;
  color: #000;
}
.broken {
  display: block;
  width: 36px;
  height: 36px;
}
.alt {
  display: block;
  width: 50px;
  overflow: hidden;
  line-height: 28px;
}
.popup {
  position: absolute;
  left: calc(50% + 1px);
  bottom: calc(50% + 94px);
  transform: translateX(-50%);
  padding: 25px 52px 27px 42px;
  border-radius: 24px;
  background-color: #fff;
  box-shadow: 0 6px 28px rgba(0,0,0,0.4);
  font-size: 26px;
  line-height: 38px;
  white-space: nowrap;
}
.popup::after {
  content: "";
  position: absolute;
  top: 100%;
  left: 50%;
  margin-left: -20px;
  border: 20px solid transparent;
  border-top-color: #fff;
  border-bottom: none;
}
.close {
  position: absolute;
  top: 16px;
  right: 16px;
  background: none;
}
.close svg {
  display: block;
  width: 14px;
  height: 14px;
}
.zoom {
  position: absolute;
  top: 20px;
  left: 20px;
  border: 4px solid rgba(0,0,0,0.25);
  border-radius: 8px;
  background-clip: padding-box;
}
.zoom button {
  display: flex;
  justify-content: center;
  align-items: center;
  width: 60px;
  height: 60px;
  background-color: #fff;
  border-radius: 0 0 4px 4px;
}
.zoom button:first-child {
  border-bottom: 2px solid #ccc;
  border-radius: 4px 4px 0 0;
}
.zoom svg {
  width: 22px;
  height: 22px;
}
.scale {
  position: absolute;
  left: 10px;
  bottom: 10px;
  width: 126px;
  padding: 0 10px;
  border: 4px solid #777;
  border-top: none;
  background-color: rgba(255,255,255,0.8);
  line-height: 32px;
}
.attribution {
  position: absolute;
  right: 0;
  bottom: 0;
  padding: 0 10px;
  background-color: rgba(255,255,255,0.8);
  line-height: 34px;
}
.attribution a {
  color: #0078a8;
}
.flag {
  width: 24px;
  height: 16px;
}

/* loading skeleton */
.loading {
  padding: 48px;
}
.bar {
  height: 40px;
  border-radius: 12px;
  background-color: #e5e6e8;
}
.bar-title {
  width: 75%;
  height: 64px;
  margin-bottom: 12px;
}
.bar-subtitle {
  width: 66.6%;
  height: 48px;
  margin-bottom: 16px;
}
.row {
  display: flex;
  justify-content: space-between;
  padding: 48px 0 16px;
  border-bottom: 2px solid #e2e8f0;
}
.right {
  display: flex;
  flex-direction: column;
  align-items: flex-end;
}
.name {
  width: 320px;
  margin-bottom: 16px;
}
.unit {
  width: 192px;
  height: 32px;
}
.price {
  width: 160px;
  margin-bottom: 16px;
}
.date {
  width: 128px;
  height: 32px;
}

.feedback {
  position: fixed;
  right: 50px;
  bottom: 0;
  height: 68px;
  padding: 0 30px;
  border-radius: 10px 10px 0 0;
  background-color: #b700b7;
  box-shadow: 0 0 6px rgba(0,0,0,0.4);
  font-family: Roboto, sans-serif;
  font-size: 32px;
  font-weight: 700;
  color: #fff;
}
```
